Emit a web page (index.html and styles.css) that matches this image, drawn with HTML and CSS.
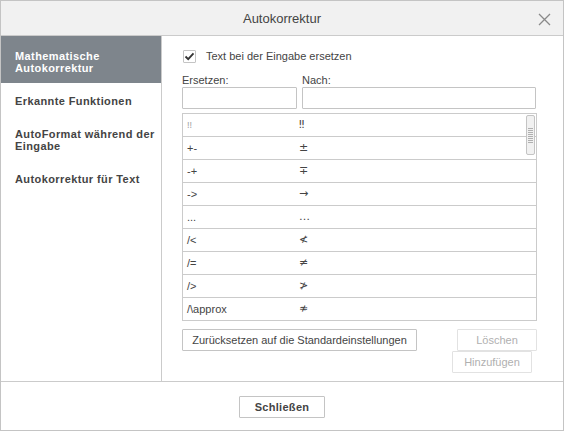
FILE: index.html
```html
<!DOCTYPE html>
<html lang="de">
<head>
<meta charset="utf-8">
<title>Autokorrektur</title>
<link rel="stylesheet" href="styles.css">
</head>
<body>
<div class="dialog">
  <div class="header">
    <span class="title">Autokorrektur</span>
    <svg class="close" width="13" height="13" viewBox="0 0 13 13"><path d="M1 1 L12 12 M12 1 L1 12" stroke="#8a8a8a" stroke-width="1.3" fill="none"/></svg>
  </div>
  <div class="body">
    <div class="sidebar">
      <div class="item active">Mathematische<br>Autokorrektur</div>
      <div class="item">Erkannte Funktionen</div>
      <div class="item">AutoFormat während der<br>Eingabe</div>
      <div class="item">Autokorrektur für Text</div>
    </div>
    <div class="content">
      <label class="check-row">
        <span class="checkbox"><svg width="11" height="11" viewBox="0 0 11 11"><path d="M1.5 5.5 L4.2 8.2 L9.5 2.3" stroke="#333" stroke-width="1.8" fill="none"/></svg></span>
        <span>Text bei der Eingabe ersetzen</span>
      </label>
      <div class="labels">
        <span class="lbl1">Ersetzen:</span>
        <span>Nach:</span>
      </div>
      <div class="inputs">
        <div class="input in1"></div>
        <div class="input in2"></div>
      </div>
      <div class="table">
        <div class="row"><span class="c1 faint">!!</span><span class="c2">‼</span></div>
        <div class="row"><span class="c1">+-</span><span class="c2">±</span></div>
        <div class="row"><span class="c1">-+</span><span class="c2">∓</span></div>
        <div class="row"><span class="c1">-&gt;</span><span class="c2">→</span></div>
        <div class="row"><span class="c1">...</span><span class="c2">…</span></div>
        <div class="row"><span class="c1">/&lt;</span><span class="c2">≮</span></div>
        <div class="row"><span class="c1">/=</span><span class="c2">≠</span></div>
        <div class="row"><span class="c1">/&gt;</span><span class="c2">≯</span></div>
        <div class="row"><span class="c1">/\approx</span><span class="c2">≉</span></div>
        <div class="thumb"><span></span><span></span><span></span><span></span><span></span><span></span><span></span><span></span></div>
      </div>
      <div class="actions">
        <div class="btn reset">Zurücksetzen auf die Standardeinstellungen</div>
        <div class="stack">
          <div class="btn disabled del">Löschen</div>
          <div class="btn disabled add">Hinzufügen</div>
        </div>
      </div>
    </div>
  </div>
  <div class="footer">
    <div class="btn close-btn">Schließen</div>
  </div>
</div>
</body>
</html>
```
FILE: styles.css
```css
* { box-sizing: border-box; }
html, body { margin: 0; padding: 0; background: #fff; }
body {
  font-family: "Liberation Sans", Arial, sans-serif;
  font-size: 11px;
  color: #444;
}
.dialog {
  width: 564px;
  height: 431px;
  border: 1px solid #c4c4c4;
  display: flex;
  flex-direction: column;
  background: #fff;
}
.header {
  position: relative;
  height: 35px;
  flex: none;
  background: #f1f1f1;
  border-bottom: 1px solid #cbcbcb;
  display: flex;
  align-items: center;
  justify-content: center;
}
.title {
  font-size: 13px;
  color: #444;
  line-height: 15px;
  margin-top: 1px;
}
.close {
  position: absolute;
  right: 12px;
  top: 12px;
}
.body {
  height: 346px;
  flex: none;
  display: flex;
  border-bottom: 1px solid #cbcbcb;
}
.sidebar {
  width: 161px;
  flex: none;
  border-right: 1px solid #cbcbcb;
}
.item {
  font-weight: bold;
  line-height: 12px;
  letter-spacing: 0.4px;
  padding: 12px 4px 9px 14px;
  color: #444;
  white-space: nowrap;
}
.item.active {
  background: #7e858c;
  color: #fff;
  padding-top: 14px;
}
.content {
  flex: 1;
  padding: 14px 0 0 20px;
  display: flex;
  flex-direction: column;
}
.check-row {
  display: flex;
  align-items: center;
  height: 13px;
  line-height: 13px;
  padding-left: 1px;
}
.checkbox {
  width: 13px;
  height: 13px;
  border: 1px solid #c4c4c4;
  border-radius: 1px;
  display: flex;
  align-items: center;
  justify-content: center;
  margin-right: 10px;
  background: #fff;
}
.checkbox svg { display: block; }
.labels {
  margin-top: 11px;
  display: flex;
  line-height: 12px;
  height: 12px;
}
.lbl1 { width: 120px; }
.inputs {
  margin-top: 1px;
  display: flex;
  gap: 5px;
}
.input {
  height: 22px;
  border: 1px solid #c4c4c4;
  border-radius: 1px;
  background: #fff;
}
.in1 { width: 115px; }
.in2 { width: 234px; }
.table {
  position: relative;
  margin-top: 4px;
  width: 355px;
  border: 1px solid #cbcbcb;
  border-bottom: none;
}
.row {
  height: 23px;
  border-bottom: 1px solid #cbcbcb;
  display: flex;
  align-items: center;
  line-height: 14px;
}
.c1 {
  width: 116px;
  padding-left: 4px;
  flex: none;
}
.c1.faint { color: #a0a0a0; font-size: 9px; }
.c2 {
  font-family: "DejaVu Sans", sans-serif;
  font-size: 11px;
  color: #444;
}
.thumb {
  position: absolute;
  right: 1px;
  top: 1px;
  width: 9px;
  height: 40px;
  background: #f1f1f1;
  border: 1px solid #c4c4c4;
  border-radius: 2px;
  display: flex;
  flex-direction: column;
  align-items: center;
  justify-content: center;
  gap: 1px;
}
.thumb span {
  display: block;
  width: 5px;
  height: 1px;
  background: #b0b0b0;
}
.actions {
  margin-top: 8px;
  width: 355px;
  display: flex;
  justify-content: space-between;
  align-items: flex-start;
}
.btn {
  height: 22px;
  border: 1px solid #c4c4c4;
  border-radius: 1px;
  background: #fff;
  display: flex;
  align-items: center;
  justify-content: center;
  color: #444;
  white-space: nowrap;
}
.reset { width: 235px; }
.stack {
  display: flex;
  flex-direction: column;
  align-items: flex-end;
}
.btn.disabled {
  color: #b0b0b0;
  border-color: #e2e2e2;
}
.del { width: 80px; }
.add { width: 80px; margin-right: 5px; }
.footer {
  flex: 1;
  display: flex;
  justify-content: center;
  padding-top: 14px;
}
.close-btn {
  width: 86px;
  font-weight: bold;
  letter-spacing: 0.3px;
}
```
